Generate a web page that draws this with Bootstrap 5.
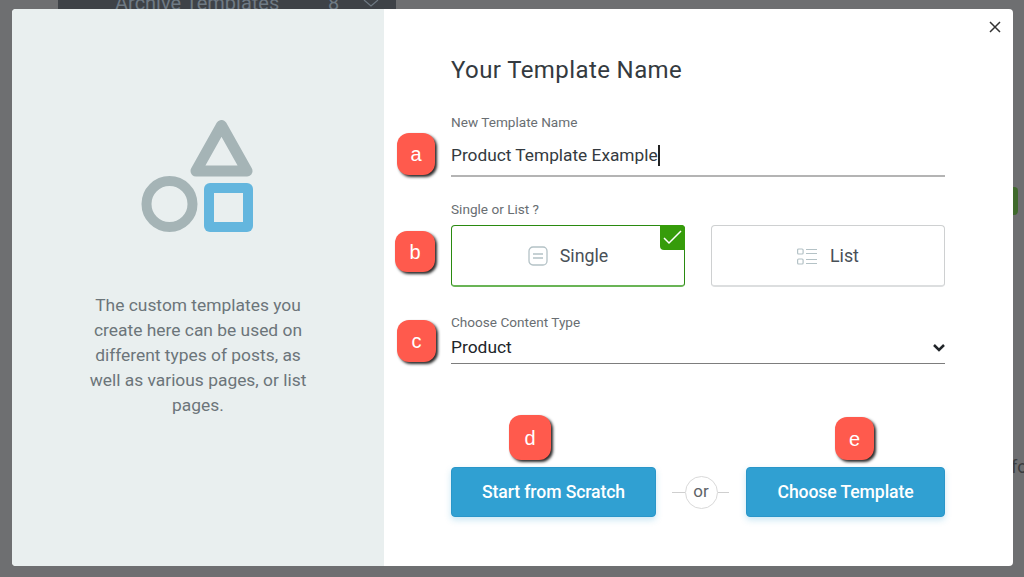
<!DOCTYPE html>
<html lang="en">
<head>
    <meta charset="UTF-8">
    <title>Your Template Name</title>
    <link href="https://cdn.jsdelivr.net/npm/bootstrap@5.3.3/dist/css/bootstrap.min.css" rel="stylesheet">
    <style>
        html, body { height: 100%; margin: 0; overflow: hidden; }
        body { background: #6e6f71; font-family: Roboto, "Liberation Sans", sans-serif; color: #343a40; }

        /* page behind the overlay */
        .back-tab { position: absolute; top: 0; left: 58px; width: 338px; height: 9px; background: #3e4247; overflow: hidden; color: #6f7a84; font-size: 20px; }
        .back-tab span { position: absolute; bottom: -4px; line-height: 20px; white-space: nowrap; }
        .back-tab svg { position: absolute; top: 0; left: 305px; }
        .back-pill { position: absolute; top: 187px; left: 1013px; width: 5px; height: 28px; background: #3f6a2c; border-radius: 0 4px 4px 0; }
        .back-text { position: absolute; top: 453px; left: 1011px; font-size: 18px; color: #3b3d40; }

        .tpl-dialog { position: absolute; top: 9px; left: 12px; width: 1001px; height: 557px; background: #fff; border-radius: 4px; overflow: hidden; }
        .tpl-side { width: 372px; background: #e9efef; padding-top: 111px; }
        .tpl-side svg { display: block; margin: 0 auto 0 129px; }
        .tpl-side p { width: 232px; margin: 61px auto 0; font-size: 17.4px; line-height: 25px; color: #6c757a; text-align: center; }

        .tpl-main { width: 494px; margin-left: 67px; }
        .tpl-title { font-size: 24px; font-weight: 400; line-height: 30px; margin: 46px 0 0; color: #343a40; letter-spacing: .4px; }
        .tpl-label { display: block; font-size: 13.6px; line-height: 16px; color: #696e72; margin: 0; }

        .name-field { margin-top: 29px; height: 63px; border-bottom: 2px solid #b4b4b4; }
        .name-value { font-size: 17.3px; line-height: 22px; margin-top: 14px; display: flex; align-items: center; color: #343a40; }
        .name-caret { display: inline-block; width: 2px; height: 21px; background: #222; }

        .type-row { gap: 26px; margin-top: 8px; }
        .type-opt { position: relative; width: 234px; height: 62px; padding-top: 1px; border: 1px solid #ced0d1; border-bottom-width: 2px; border-bottom-color: #dcdedf; border-radius: 4px; font-size: 17.8px; color: #495057; gap: 12px; }
        .type-opt.is-on { border-color: #2a8a10; border-bottom-color: #69b456; }
        .type-tick { position: absolute; top: -1px; right: -1px; width: 25px; height: 25px; background: #369c0a; border-radius: 0 4px 0 4px; }
        .type-tick svg { display: block; }

        .ctype { margin-top: 27px; }
        .ctype-value { height: 33px; border-bottom: 1px solid #7d7d7d; font-size: 17.4px; color: #212529; padding-top: 1px; margin-top: 1px; }

        .tpl-actions { margin-top: 103px; }
        .tpl-btn { height: 50px; background: #30a0d2; border: 1px solid #2a96c9; border-radius: 4px; color: #fff; font-size: 17.6px; font-weight: 500; box-shadow: 0 3px 6px rgba(48,160,210,.25); letter-spacing: -.1px; padding: 0; }
        .tpl-btn:hover { background: #30a0d2; color: #fff; border-color: #2a96c9; }
        .btn-scratch { width: 205px; }
        .btn-choose { width: 199px; }
        .or-wrap { width: 90px; padding-right: 2px; }
        .or-line { width: 13px; height: 1px; background: #cfcfcf; }
        .or-dot { width: 33px; height: 33px; border: 1px solid #d9d9d9; border-radius: 50%; font-size: 17px; color: #5f6468; line-height: 1; padding-bottom: 2px; }
        .or-dot + .or-line { width: 11px; }

        .tag { position: absolute; display: flex; align-items: center; justify-content: center; background: #ff5a4d; color: #fff; border-radius: 12px; font-family: "Liberation Sans", sans-serif; font-size: 20px; box-shadow: 2px 2px 3px rgba(0,0,0,.85); }

        .x-btn { position: absolute; top: 11px; right: 11px; width: 14px; height: 14px; padding: 0; border: 0; background: none; }
    </style>
</head>
<body>
    <div class="back-tab">
        <span style="left:57px">Archive Templates</span><span style="left:270px">8</span>
        <svg width="16" height="9" viewBox="0 0 16 9" fill="none" stroke="#6f7a84" stroke-width="1.200"><path d="M1 0l7 6 7-6"/></svg>
    </div>
    <div class="back-pill"></div>
    <div class="back-text">fo</div>

    <div class="tpl-dialog d-flex">
        <div class="tpl-side">
            <svg width="112" height="112" viewBox="0 0 112 112" fill="none">
                <path d="M80.500 5.500L106 51H55Z" stroke="#a5b4b6" stroke-width="11" stroke-linejoin="round"/>
                <circle cx="28.500" cy="84" r="23" stroke="#a5b4b6" stroke-width="10"/>
                <rect x="63" y="63" width="49" height="49" rx="6" fill="#64b6de"/>
                <rect x="73" y="73" width="29" height="29" fill="#e9efef"/>
            </svg>
            <p>The custom templates you create here can be used on different types of posts, as well as various pages, or list pages.</p>
        </div>
        <div class="tpl-main">
            <h1 class="tpl-title">Your Template Name</h1>
            <div class="name-field">
                <label class="tpl-label">New Template Name</label>
                <div class="name-value">Product Template Example<span class="name-caret"></span></div>
            </div>
            <label class="tpl-label mt-4">Single or List ?</label>
            <div class="type-row d-flex">
                <div class="type-opt is-on d-flex align-items-center justify-content-center">
                    <svg width="20" height="20" viewBox="0 0 20 20" fill="none" stroke="#b4c2c6" stroke-width="1.300">
                        <rect x="1" y="1" width="18" height="18" rx="4"/>
                        <path d="M5 8h10M5 12h10"/>
                    </svg>
                    <span>Single</span>
                    <div class="type-tick">
                        <svg width="25" height="25" viewBox="0 0 25 25" fill="none" stroke="#fff" stroke-width="1.500"><path d="M4 13l5 5 12-12"/></svg>
                    </div>
                </div>
                <div class="type-opt d-flex align-items-center justify-content-center">
                    <svg width="21" height="17" viewBox="0 0 21 17" fill="none" stroke="#b4c2c6" stroke-width="1.200">
                        <rect x=".6" y="1" width="5.500" height="5" rx="1"/>
                        <rect x=".6" y="11" width="5.500" height="5" rx="1"/>
                        <path d="M9 1.500h11M9 5.500h11M9 11.500h11M9 15.500h11"/>
                    </svg>
                    <span>List</span>
                </div>
            </div>
            <div class="ctype">
                <label class="tpl-label">Choose Content Type</label>
                <div class="ctype-value d-flex justify-content-between align-items-center">
                    <span>Product</span>
                    <svg width="12" height="8" viewBox="0 0 12 8" fill="none" stroke="#212529" stroke-width="2.500"><path d="M1 1l5 5 5-5"/></svg>
                </div>
            </div>
            <div class="tpl-actions d-flex align-items-center">
                <button type="button" class="btn tpl-btn btn-scratch">Start from Scratch</button>
                <div class="or-wrap d-flex align-items-center justify-content-center">
                    <span class="or-line"></span>
                    <span class="or-dot d-flex align-items-center justify-content-center">or</span>
                    <span class="or-line"></span>
                </div>
                <button type="button" class="btn tpl-btn btn-choose">Choose Template</button>
            </div>
        </div>
        <button type="button" class="x-btn" aria-label="Close">
            <svg width="14" height="14" viewBox="0 0 14 14" stroke="#333" stroke-width="1.500" class="d-block"><path d="M2 2l10 10M12 2L2 12"/></svg>
        </button>
    </div>

    <div class="tag" style="left:397px;top:133px;width:38px;height:42px">a</div>
    <div class="tag" style="left:395px;top:231px;width:40px;height:41px">b</div>
    <div class="tag" style="left:397px;top:320px;width:39px;height:42px">c</div>
    <div class="tag" style="left:509px;top:415px;width:42px;height:45px">d</div>
    <div class="tag" style="left:835px;top:417px;width:39px;height:43px">e</div>

    <script src="https://cdn.jsdelivr.net/npm/bootstrap@5.3.3/dist/js/bootstrap.bundle.min.js"></script>
</body>
</html>
